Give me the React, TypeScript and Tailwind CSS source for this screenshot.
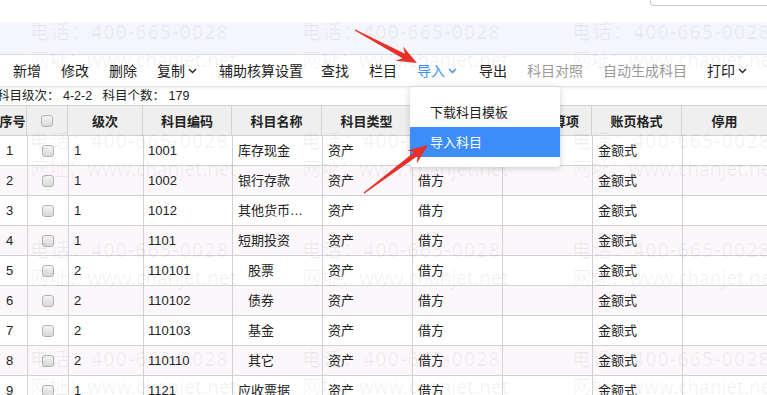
import React from "react";

const rows = [
  { no: 1, level: 1, code: "1001", name: "库存现金" },
  { no: 2, level: 1, code: "1002", name: "银行存款" },
  { no: 3, level: 1, code: "1012", name: "其他货币…" },
  { no: 4, level: 1, code: "1101", name: "短期投资" },
  { no: 5, level: 2, code: "110101", name: "股票" },
  { no: 6, level: 2, code: "110102", name: "债券" },
  { no: 7, level: 2, code: "110103", name: "基金" },
  { no: 8, level: 2, code: "110110", name: "其它" },
  { no: 9, level: 1, code: "1121", name: "应收票据" },
];

const Chevron = () => (
  <svg width="9" height="6" viewBox="0 0 9 6" className="ml-[3px] mt-[1px]">
    <polyline points="1,1 4.5,4.5 8,1" fill="none" stroke="currentColor" strokeWidth="1.3" />
  </svg>
);

const Checkbox = () => (
  <div className="w-[12px] h-[12px] rounded-[3px] border border-[#b4b4b4] bg-gradient-to-b from-[#f6f6f6] to-[#d9d9d9]" />
);

// red annotation arrow, tip at (x2,y2)
const Arrow = ({ x1, y1, x2, y2 }: { x1: number; y1: number; x2: number; y2: number }) => {
  const len = Math.hypot(x2 - x1, y2 - y1);
  const angle = (Math.atan2(y2 - y1, x2 - x1) * 180) / Math.PI;
  const pts = [
    [0, 0],
    [-20, -8],
    [-15, -2.6],
    [-len, -0.6],
    [-len, 0.6],
    [-15, 2.6],
    [-20, 8],
  ]
    .map((p) => p.join(","))
    .join(" ");
  return (
    <g transform={`translate(${x2} ${y2}) rotate(${angle})`}>
      <polygon points={pts} fill="#e8302a" />
    </g>
  );
};

const Watermark = () => {
  const ys = [20, 129, 238, 347];
  const xs = [30, 302, 572];
  return (
    <div className="absolute inset-0 pointer-events-none text-black/[0.06] text-[19px] leading-[24px] font-['Noto_Sans','Noto_Sans_CJK_SC',sans-serif]">
      {ys.map((y) =>
        xs.map((x) => (
          <div key={`${x}-${y}`} className="absolute whitespace-nowrap" style={{ left: x, top: y }}>
            <div className="tracking-[1.4px]">电话：400-665-0028</div>
            <div className="mt-[4px]">网址：www.chanjet.net</div>
          </div>
        ))
      )}
    </div>
  );
};

const toolItems: { label: string; tone?: "blue" | "gray"; chevron?: boolean; cls?: string }[] = [
  { label: "新增" },
  { label: "修改" },
  { label: "删除" },
  { label: "复制", chevron: true },
  { label: "辅助核算设置", cls: "ml-[2px]" },
  { label: "查找", cls: "-ml-[2px]" },
  { label: "栏目" },
  { label: "导入", tone: "blue", chevron: true },
  { label: "导出", cls: "ml-[2px]" },
  { label: "科目对照", tone: "gray" },
  { label: "自动生成科目", tone: "gray" },
  { label: "打印", chevron: true },
];

const headers = ["级次", "科目编码", "科目名称", "科目类型", "余额方向", "辅助核算项", "账页格式"];
const widths = ["w-[75px]", "w-[89px]", "w-[90px]", "w-[90px]", "w-[90px]", "w-[90px]", "w-[90px]"];

export default function App() {
  return (
    <div className="relative w-[767px] h-[395px] overflow-hidden bg-white text-[#222] font-['Liberation_Sans','Noto_Sans_CJK_SC',sans-serif]">
      {/* top strip */}
      <div className="h-[22px] flex justify-end">
        <div className="w-[117px] h-[6px] border-l border-b border-[#c9c9c9] rounded-bl-[4px]" />
      </div>
      <div className="h-[33px] bg-[#f5f6fc] border-b border-[#dadbe3]" />

      {/* toolbar */}
      <div className="h-[32px] flex items-center gap-5 pl-[13px] text-[14px] font-['Noto_Sans_CJK_SC',sans-serif] border-b border-[#e6e6e6] shadow-[0_1px_2px_rgba(0,0,0,0.07)]">
        {toolItems.map((t) => (
          <div
            key={t.label}
            className={`flex items-center ${t.cls ?? ""} ${
              t.tone === "blue" ? "text-[#3d8ef5]" : t.tone === "gray" ? "text-[#9a9a9a]" : "text-[#222]"
            }`}
          >
            {t.label}
            {t.chevron && <Chevron />}
          </div>
        ))}
      </div>

      {/* info */}
      <div className="h-[18px] flex items-center -ml-[3px] text-[12.5px] whitespace-pre">
        科目级次： 4-2-2   科目个数： 179
      </div>

      {/* table */}
      <div className="text-[13px]">
        <div className="flex h-[31px] bg-[#efeff0] border-y border-[#d2d2d2] font-bold font-['Noto_Sans_CJK_SC',sans-serif]">
          <div className="w-[28px] border-r border-[#d2d2d2] flex items-center justify-center -ml-[1px]">序号</div>
          <div className="w-[41px] border-r border-[#d2d2d2] flex items-center justify-center">
            <Checkbox />
          </div>
          {headers.map((h, i) => (
            <div key={h} className={`${widths[i]} border-r border-[#d2d2d2] flex items-center justify-center`}>
              {h}
            </div>
          ))}
          <div className="flex-1 flex items-center justify-center">停用</div>
        </div>
        {rows.map((r) => (
          <div
            key={r.no}
            className={`flex h-[30px] border-b border-[#d2d2d2] ${r.no % 2 === 0 ? "bg-[#fbf7fb]" : "bg-white"}`}
          >
            <div className="w-[28px] border-r border-[#d2d2d2] flex items-center pl-[6px]">{r.no}</div>
            <div className="w-[41px] border-r border-[#d2d2d2] flex items-center justify-center">
              <Checkbox />
            </div>
            <div className="w-[75px] border-r border-[#d2d2d2] flex items-center pl-[5px]">{r.level}</div>
            <div className="w-[89px] border-r border-[#d2d2d2] flex items-center pl-[4px]">{r.code}</div>
            <div
              className={`w-[90px] border-r border-[#d2d2d2] flex items-center whitespace-nowrap overflow-hidden ${
                r.level === 2 ? "pl-[15px]" : "pl-[5px]"
              }`}
            >
              {r.name}
            </div>
            <div className="w-[90px] border-r border-[#d2d2d2] flex items-center pl-[5px]">资产</div>
            <div className="w-[90px] border-r border-[#d2d2d2] flex items-center pl-[5px]">借方</div>
            <div className="w-[90px] border-r border-[#d2d2d2]" />
            <div className="w-[90px] border-r border-[#d2d2d2] flex items-center pl-[5px]">金额式</div>
            <div className="flex-1" />
          </div>
        ))}
      </div>

      <Watermark />

      {/* import dropdown */}
      <div className="absolute left-[410px] top-[87px] w-[150px] py-[10px] bg-white rounded-[3px] shadow-[0_1px_6px_rgba(0,0,0,0.2)] text-[13px] font-['Noto_Sans_CJK_SC',sans-serif]">
        <div className="h-[30px] flex items-center pl-[20px] text-[#222]">下载科目模板</div>
        <div className="h-[30px] flex items-center pl-[20px] bg-[#3c8dfa] text-white">导入科目</div>
      </div>

      <svg className="absolute inset-0 pointer-events-none" width="767" height="395">
        <Arrow x1={355} y1={30} x2={417} y2={63} />
        <Arrow x1={364} y1={193} x2={428} y2={145} />
      </svg>
    </div>
  );
}
